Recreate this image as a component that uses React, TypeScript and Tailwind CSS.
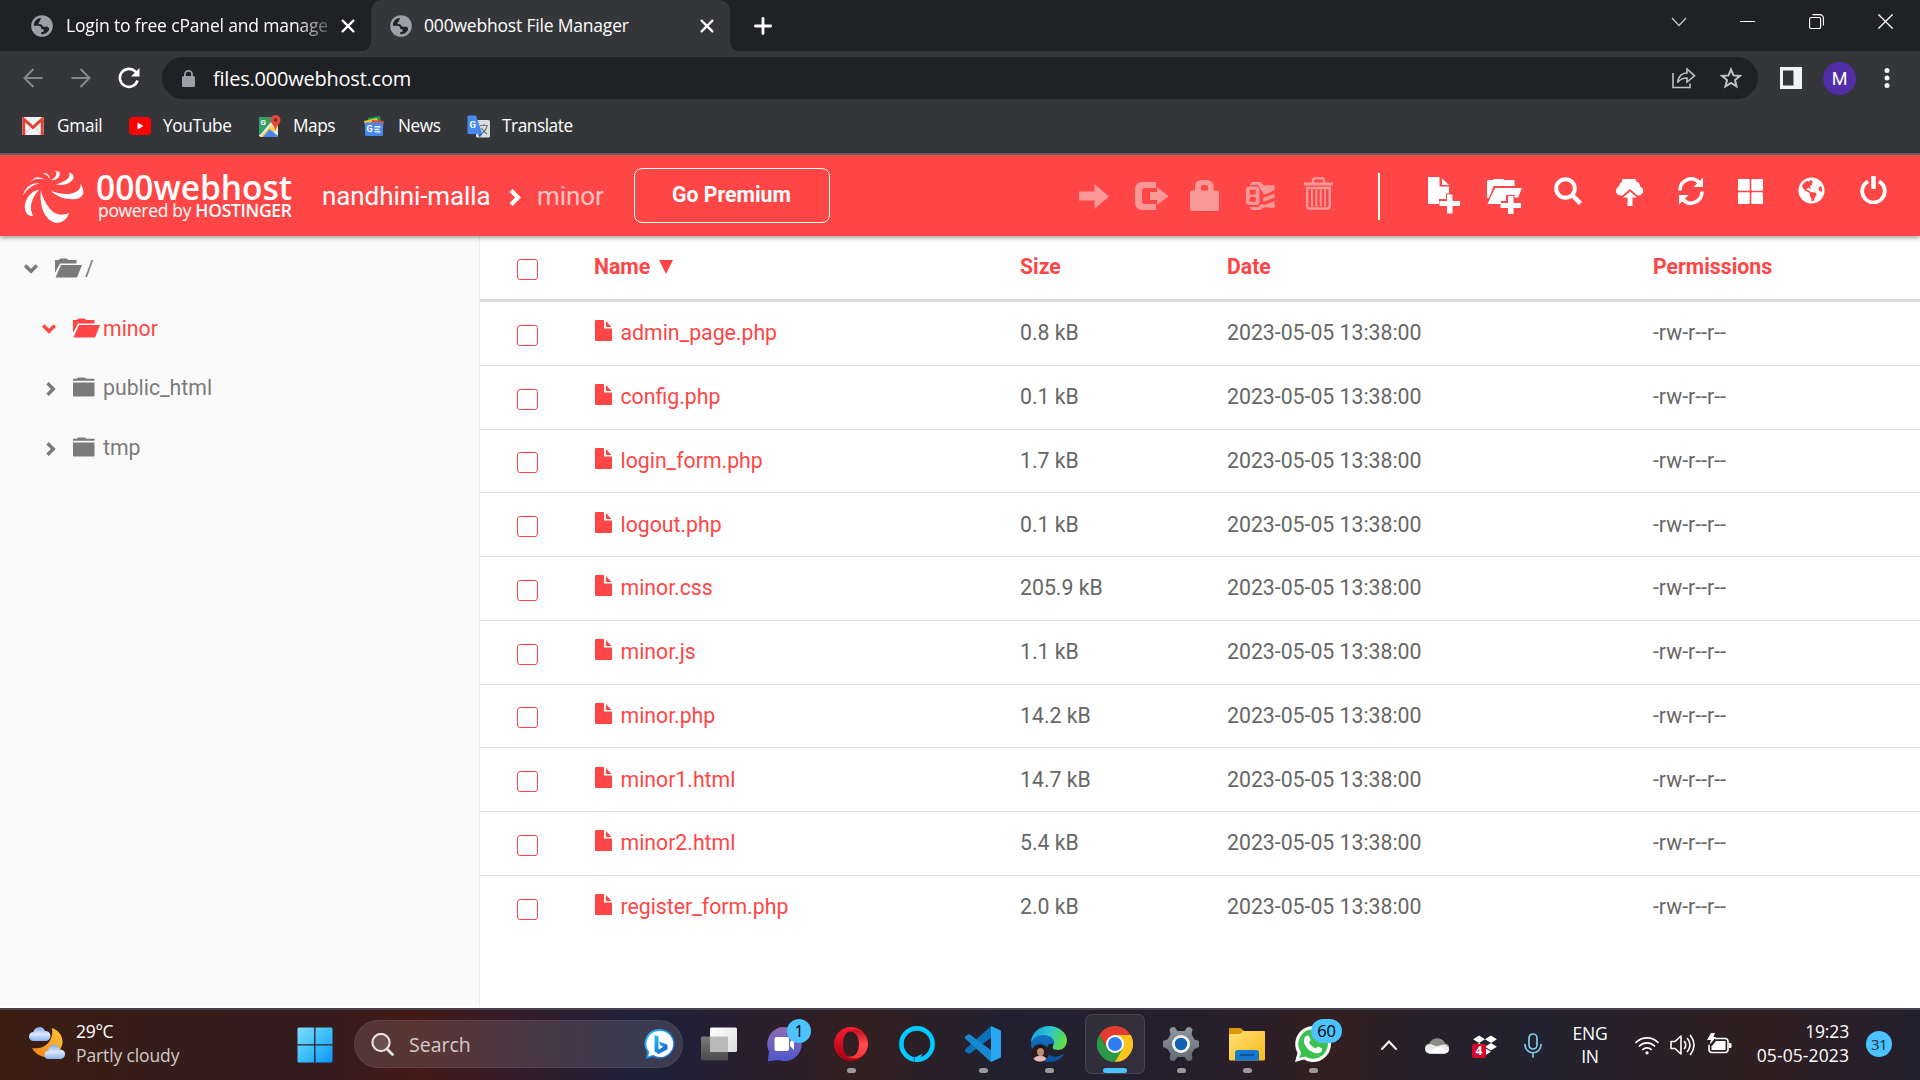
import React from "react";
import { FaDropbox, FaGlobeAmericas } from "react-icons/fa";

const UI = "font-['Open_Sans',sans-serif]";

type IconProps = { className?: string };

const GlobeFavicon = ({ className = "" }: IconProps) => (
  <svg viewBox="0 0 22 22" className={`shrink-0 ${className}`}>
    <circle cx="11" cy="11" r="10.8" fill="#9aa0a6" />
    <path d="M10 3C6 3 2.8 6.5 2.8 10.8l4.7-.1c2 0 2.6 1 2.6 2.3 0 1 1.2 1.3 2.4 1.2l.3 2.3-2.6.7v2c3 .2 6-1.300 7.600-4 .6-1.200.2-2.600-1-3.400l-4-.1c-1.800-.2-1.400-2-3-2.400l-2-.3c-.8-1 .2-2 1.400-2.200z" fill="#202124" />
    <path d="M10.200 3.400l4.200.2c.4 1.400-.4 2.400-1.800 2.600l-1.900.7-1 1.600-2-.5z" fill="#9aa0a6" />
  </svg>
);

const TabClose = ({ className = "" }: IconProps) => (
  <svg viewBox="0 0 14 14" className={`h-[14px] w-[14px] shrink-0 ${className}`} stroke="#fff" strokeWidth="2.200" strokeLinecap="round">
    <path d="M1.600 1.600l10.800 10.800M12.400 1.600L1.600 12.400" />
  </svg>
);

function TabStrip() {
  return (
    <div className="flex h-[51px] items-center bg-[#202124] text-[17.500px] text-white">
      <div className="flex h-full w-[362px] shrink-0 items-center">
        <GlobeFavicon className="ml-[31px] h-[22px] w-[22px]" />
        <div className="ml-[13px] w-[263px] whitespace-nowrap tracking-[-0.160px] [mask-image:linear-gradient(to_right,#000_87%,transparent_104%)]">
          Login to free cPanel and manage
        </div>
        <TabClose className="ml-[12px]" />
      </div>
      <svg viewBox="0 0 10 10" className="-ml-px h-[10px] w-[10px] shrink-0 self-end">
        <path d="M10 0v10H0C6 10 10 6 10 0z" fill="#35363a" />
      </svg>
      <div className="flex h-full w-[359px] shrink-0 items-center rounded-t-[11px] bg-[#35363a]">
        <GlobeFavicon className="ml-[19px] h-[22px] w-[22px]" />
        <div className="ml-[12px] w-[270px] whitespace-nowrap tracking-[-0.190px]">000webhost File Manager</div>
        <TabClose className="ml-[6px]" />
      </div>
      <svg viewBox="0 0 10 10" className="h-[10px] w-[10px] shrink-0 self-end">
        <path d="M0 0v10h10C4 10 0 6 0 0z" fill="#35363a" />
      </svg>
      <svg viewBox="0 0 18 18" className="ml-[14px] h-[18px] w-[18px] shrink-0" stroke="#fff" strokeWidth="2.800" strokeLinecap="round">
        <path d="M9 1.400v15.200M1.400 9h15.200" />
      </svg>
      <div className="ml-auto mr-[27px] flex -translate-y-1 items-center">
        <svg viewBox="0 0 16 10" className="h-[10px] w-[16px]" fill="none" stroke="#c8c8c8" strokeWidth="1.200">
          <path d="M1 1l7 7.500L15 1" />
        </svg>
        <svg viewBox="0 0 15 15" className="ml-[53px] h-[15px] w-[15px]">
          <path d="M0 7h15v1H0z" fill="#fff" />
        </svg>
        <svg viewBox="0 0 15 15" className="ml-[54px] h-[15px] w-[15px]" fill="none" stroke="#fff" strokeWidth="1.100">
          <rect x=".6" y="3.500" width="11" height="11" rx="1.600" />
          <path d="M3.500.6h7.500a3.400 3.400 0 0 1 3.400 3.400v7.500" />
        </svg>
        <svg viewBox="0 0 15 15" className="ml-[54px] h-[15px] w-[15px]" stroke="#fff" strokeWidth="1.300">
          <path d="M.4.4l14.200 14.200M14.600.4L.4 14.600" />
        </svg>
      </div>
    </div>
  );
}

function AddressBar() {
  return (
    <div className="flex h-[54px] items-center bg-[#35363a]">
      <svg viewBox="0 0 20 20" className="ml-[23px] h-[20px] w-[20px] shrink-0" fill="none" stroke="#86888b" strokeWidth="2">
        <path d="M19.500 10H1.500M10.500 1L1.500 10l9 9" />
      </svg>
      <svg viewBox="0 0 20 20" className="ml-[28px] h-[20px] w-[20px] shrink-0" fill="none" stroke="#86888b" strokeWidth="2">
        <path d="M.5 10h18M9.500 1l9 9-9 9" />
      </svg>
      <svg viewBox="0 0 22 22" className="ml-[27px] h-[22px] w-[22px] shrink-0" fill="none" stroke="#fff" strokeWidth="2.600">
        <path d="M19.500 13.500a9 9 0 1 1-2.200-9L19 6" />
        <path d="M21.500 1v8.500H13z" fill="#fff" stroke="none" />
      </svg>
      <div className="ml-[22px] flex h-[42px] w-[1596px] shrink-0 items-center rounded-full bg-[#202124]">
        <svg viewBox="0 0 13 17" className="ml-[20px] h-[17px] w-[13px] shrink-0">
          <rect y="6" width="13" height="11" rx="1.500" fill="#9aa0a6" />
          <path d="M3 7V4.200a3.500 3.300 0 0 1 7 0V7" fill="none" stroke="#9aa0a6" strokeWidth="1.800" />
        </svg>
        <span className="ml-[18px] mt-px w-[1441px] whitespace-nowrap text-[20px] tracking-[-0.220px] text-white">files.000webhost.com</span>
        <svg viewBox="0 0 24 22" className="ml-[18px] h-[22px] w-[24px] shrink-0" fill="none" stroke="#bdc1c6" strokeWidth="1.600">
          <path d="M1 6v14.500h17V16.500" />
          <path d="M5.500 15.500C6.500 9 10 6 15 6V2l7.500 6.800L15 15v-4c-4 0-7 1.200-9.500 4.500z" />
        </svg>
        <svg viewBox="0 0 22 22" className="ml-[24px] h-[22px] w-[22px] shrink-0" fill="none" stroke="#bdc1c6" strokeWidth="2">
          <path d="M11 2.500l2.500 5.900 6.400.5-4.900 4.200 1.500 6.300L11 16l-5.500 3.400L7 13.100 2.100 8.900l6.400-.5z" />
        </svg>
      </div>
      <svg viewBox="0 0 22 22" className="ml-[22px] h-[22px] w-[22px] shrink-0">
        <path d="M0 0h22v22H0z M3 3.500v15h10.500v-15z" fill="#f1f3f4" fillRule="evenodd" />
      </svg>
      <div className="ml-[21px] flex h-[33px] w-[33px] shrink-0 items-center justify-center rounded-full bg-[#512da8] font-[Roboto,sans-serif] text-[18px] text-white">M</div>
      <svg viewBox="0 0 6 22" className="ml-[28px] h-[22px] w-[6px] shrink-0" fill="#f1f3f4">
        <circle cx="3" cy="3.500" r="2.500" />
        <circle cx="3" cy="11" r="2.500" />
        <circle cx="3" cy="18.500" r="2.500" />
      </svg>
    </div>
  );
}

function Bookmarks() {
  return (
    <div className="flex h-[50px] items-center border-b-2 border-[#5f6368] bg-[#35363a] pb-[6px] text-[17.250px] tracking-[-0.450px] text-white">
      <svg viewBox="0 0 22 18" className="ml-[22px] h-[18px] w-[22px] shrink-0">
        <rect width="22" height="18" rx="1.500" fill="#f1f1f1" />
        <path d="M3.500 17L9 10M18.500 17L13 10" stroke="#d3d3d3" />
        <path d="M1.700 18V2L11 10.500 20.300 2v16" fill="none" stroke="#dc4438" strokeWidth="3" />
      </svg>
      <span className="ml-[13px] w-[72px] tracking-[-0.300px]">Gmail</span>
      <svg viewBox="0 0 22 18" className="h-[18px] w-[22px] shrink-0">
        <rect width="22" height="18" rx="4" fill="#f00" />
        <path d="M8.500 5.500v7l6-3.500z" fill="#fff" />
      </svg>
      <span className="ml-[12px] w-[96px] tracking-[-0.350px]">YouTube</span>
      <svg viewBox="0 0 22 22" className="h-[22px] w-[22px] shrink-0">
        <rect y="2" width="19" height="20" rx="2" fill="#e8eaed" />
        <path d="M0 4a2 2 0 0 1 2-2h14L2 19l-2 1z" fill="#34a066" />
        <path d="M1 22L15 7l4 4v2L9.500 22z" fill="#fcd04b" />
        <path d="M4 22l6.500-8L19 21l-1 1z" fill="#4a86ee" />
        <path d="M3 20L15 8l4 4-9 .8z" fill="#f4f4f4" opacity=".5" />
        <text x="1.500" y="10" fontSize="8" fontWeight="700" fill="#fff" fontFamily="Roboto">G</text>
        <path d="M16.500 0a5 5 0 0 1 5 5c0 3.600-4.200 5.400-5 11-.8-5.600-5-7.400-5-11a5 5 0 0 1 5-5z" fill="#e04a3f" />
        <circle cx="16.500" cy="5" r="1.800" fill="#7c2720" />
      </svg>
      <span className="ml-[12px] w-[70px]">Maps</span>
      <svg viewBox="0 0 22 20" className="h-[20px] w-[22px] shrink-0">
        <path d="M5 2l12-2 2 12H5z" fill="#159a55" />
        <path d="M1 5l13-3 3 11H3z" fill="#f7c32e" />
        <path d="M9 4l12 1-1.500 10H8z" fill="#e2483a" />
        <rect x="2" y="6.500" width="18" height="13.500" rx="1.500" fill="#4688f1" />
        <text x="3.500" y="16" fontSize="9" fontWeight="700" fill="#fff" fontFamily="Roboto">G</text>
        <path d="M11.500 10h6v1.500h-6zM11.500 12.700h5v1.500h-5zM11.500 15.300h6v1.300h-6z" fill="#fff" />
      </svg>
      <span className="ml-[13px] w-[69px]">News</span>
      <svg viewBox="0 0 23 23" className="h-[23px] w-[23px] shrink-0">
        <rect x="9" y="5" width="14" height="17.500" rx="1.500" fill="#dcdcdc" />
        <path d="M13 10.500h8M17 9v2M20 11c-1 4-3 6-5.500 7.500M14.500 13c1.500 3 3 4.500 5.500 6" stroke="#6d7680" strokeWidth="1.200" fill="none" />
        <path d="M1.500.5H9L15.500 19H2a1.500 1.500 0 0 1-1.500-1.500v-16z" fill="#4889f0" />
        <path d="M11 19h4.500L12.500 22.500z" fill="#2f5fc8" />
        <text x="2.500" y="12.500" fontSize="9.500" fontWeight="700" fill="#fff" fontFamily="Roboto">G</text>
      </svg>
      <span className="ml-[12px]">Translate</span>
    </div>
  );
}

const HostLogo = () => (
  <svg viewBox="0 0 64 54" className="ml-[22px] mt-[-1px] h-[54px] w-[64px] shrink-0" fill="#fff">
    <path d="M19 20C17 35 22 50 34 53C42 53 46 47 47 43C40 46 33 45 28 39C23 33 20 26 19 20Z" />
    <path d="M28.500 20.500C36 28 46 30 54 29C61 28 64 22 58.500 14C59 20 54 23 47 24C40 24.500 34 23 28.500 20.500Z" />
    <path d="M34 14.500C41 16 49 14 51.500 8C52 5 50 3 47 2.700C49 7 45 11 34 14.500Z" />
    <path d="M29 10C35 11 39 6 37.500 2C36 1 34.500 1 33 1.300C36 3 34 8 29 10Z" />
    <path d="M21 3.500C25 2.500 28 5 27.500 9.500C27 6.500 24.500 4.500 21 3.500Z" />
    <path d="M8.500 12C12 7 17 5.500 22 9.500C17 8 12 9 8.500 12Z" />
    <path d="M1 25.500C3 17 10 12.500 17.500 13.500C10 15 5 19 1 25.500Z" />
    <path d="M17 20C9 20 1.500 31 3 39C4 44 6 46 11 46C6.500 37 10 27 17 20Z" />
  </svg>
);

function AppHeader() {
  return (
    <header className="relative z-10 flex h-[81px] items-start bg-[#ff4646] text-white shadow-[0_2px_4px_rgba(0,0,0,0.35)]">
      <div className="mt-[16px] flex">
        <HostLogo />
        <div className={`ml-[10px] flex w-[198px] flex-col whitespace-nowrap ${UI}`}>
          <span className="mt-[-2px] text-[33.500px] font-semibold leading-[36px] tracking-[-0.020px]">000webhost</span>
          <span className="mt-[-5px] pl-[2px] text-[17.500px] leading-[20px] tracking-[-0.320px]">
            powered by <span className="font-semibold">HOSTINGER</span>
          </span>
        </div>
      </div>
      <div className="ml-[28px] mt-[26px] flex w-[312px] items-start whitespace-nowrap font-[Roboto,sans-serif] text-[26px] leading-[30px] tracking-[-0.090px]">
        <span className="w-[187px]">nandhini-malla</span>
        <svg viewBox="0 0 13 17" className="mt-[8px] h-[17px] w-[13px] shrink-0" fill="none" stroke="#fff" strokeWidth="4.200">
          <path d="M2 1.500l7 7-7 7" />
        </svg>
        <span className="ml-[15px] text-[#ffc4c4]">minor</span>
      </div>
      <div className="mt-[13px] flex h-[55px] w-[196px] shrink-0 items-center justify-center rounded-[8px] border border-white pb-px pr-px font-[Roboto,sans-serif] text-[21.250px] font-bold">
        Go Premium
      </div>
      <div className="ml-[249px] mt-[20px] flex items-start text-[#fa9898]">
        <svg viewBox="0 0 30 25" className="mt-[9px] h-[25px] w-[30px]" fill="currentColor">
          <path d="M0 7.500h15.500V0L30 12.500 15.500 25v-8.500H0z" />
        </svg>
        <svg viewBox="0 0 34 28" className="ml-[26px] mt-[7px] h-[28px] w-[34px]" fill="currentColor">
          <path d="M7 0h14v6H8.500L7 7.500v13L8.500 22H21v6H7a7 7 0 0 1-7-7V7a7 7 0 0 1 7-7z" />
          <path d="M15 10h7V5l11.500 9.200L22 23v-5h-7z" />
        </svg>
        <svg viewBox="0 0 29 31" className="ml-[21px] mt-[5px] h-[31px] w-[29px]" fill="currentColor">
          <path d="M2 10.500h3V6a6 6 0 0 1 6-6h6.500a6 6 0 0 1 6 6v4.500H27a2 2 0 0 1 2 2V29a2 2 0 0 1-2 2H2a2 2 0 0 1-2-2V12.500a2 2 0 0 1 2-2zm9 0h7V7a2 2 0 0 0-2-2h-3a2 2 0 0 0-2 2z" />
        </svg>
        <svg viewBox="0 0 30 28" className="ml-[27px] mt-[7px] h-[28px] w-[30px]" fill="currentColor">
          <path d="M3.500 4.500h6.500a3.500 3.500 0 0 1 3.500 3.500v11.500a3.500 3.500 0 0 1-3.500 3.500H3.500A3.500 3.500 0 0 1 0 19.500V8a3.500 3.500 0 0 1 3.500-3.500zM3.700 7.700v4.800h6.100V7.700zM3.700 15v4.800h6.100V15z" fillRule="evenodd" />
          <path d="M3.500 3L6 0h8.500L18 3.500l10.500-.5v5L18.500 13 15 8l-3-5z" />
          <path d="M28.500 11.500v4L17 20v-4z" />
          <path d="M28.500 19v7L18 25.300 14.500 28H6l-3-3h9l3.500-3 3 1z" />
        </svg>
        <svg viewBox="0 0 29 33" className="ml-[28px] mt-[2px] h-[33px] w-[29px]" fill="none" stroke="currentColor">
          <path d="M0 7h29" strokeWidth="3" />
          <path d="M9 6V3.500Q9 1.300 11.500 1.300h6Q20 1.300 20 3.500V6" strokeWidth="2.400" />
          <path d="M3.200 11h22.600v18q0 2.500-2.500 2.500H5.700q-2.500 0-2.500-2.500z" strokeWidth="2.400" />
          <path d="M8 12.500v17M12.300 12.500v17M16.700 12.500v17M21 12.500v17" strokeWidth="1.900" />
        </svg>
      </div>
      <div className="ml-[45px] mt-[18px] h-[47px] w-[2px] bg-white" />
      <div className="ml-[48px] mt-[20px] flex items-start">
        <svg viewBox="0 0 32 38" className="mt-[2px] h-[38px] w-[32px]" fill="#fff">
          <path d="M0 0h11.500v9.500H21v7h-3v5.500h-7V27H1q-1 0-1-1z" />
          <path d="M14 1.500L21 8h-7z" />
          <path d="M19 17.500h5.500V24H32v5h-7.500v7.500H19V29h-7.500v-5H19z" />
        </svg>
        <svg viewBox="0 0 35 36" className="ml-[27px] mt-[3px] h-[36px] w-[35px]" fill="#fff">
          <path d="M0 3l1-1h5q0-1 1.500-1h8q1.500 0 1.500 1h10.500v6H6.500L2 20H0z" />
          <path d="M8 10h27l-4 9.500h-3.500V17H19v6h-5v3H0.500z" />
          <path d="M21 18h5.500v7H34v5h-7.500v6H21v-6h-7.500v-5H21z" />
        </svg>
        <svg viewBox="0 0 28 28" className="ml-[32px] mt-[2px] h-[28px] w-[28px]" fill="none" stroke="#fff">
          <circle cx="11.500" cy="11.500" r="9.300" strokeWidth="4" />
          <path d="M18.500 18.500l8 8" strokeWidth="4.500" />
        </svg>
        <svg viewBox="0 0 28 27" className="ml-[34px] mt-[4px] h-[27px] w-[28px]" fill="#fff">
          <path d="M6.500 16.500H4A4.500 4.500 0 0 1 .5 10 5 5 0 0 1 3 7 5 5 0 0 1 6 3a7 7 0 0 1 14-.500A5 5 0 0 1 24 7.500a4.800 4.800 0 0 1 .5 8.800l-3 .2-7.500-6.500z" />
          <path d="M14 12.500l7 6h-4.500V27h-5v-8.500H7z" />
        </svg>
        <svg viewBox="0 0 26 28" className="ml-[34px] mt-[2px] h-[28px] w-[26px]" fill="none" stroke="#fff" strokeWidth="3.600">
          <path d="M2 13.500A11 11.300 0 0 1 21 5.500" />
          <path d="M24 14.500A11 11.300 0 0 1 5 22.500" />
          <path d="M25 .5V10h-9.500zM1 27.500V18h9.500z" fill="#fff" stroke="none" />
        </svg>
        <svg viewBox="0 0 25 25" className="ml-[34px] mt-[4px] h-[25px] w-[25px]" fill="#fff">
          <rect width="11.700" height="11.700" rx="1" />
          <rect x="13.300" width="11.700" height="11.700" rx="1" />
          <rect y="13.300" width="11.700" height="11.700" rx="1" />
          <rect x="13.300" y="13.300" width="11.700" height="11.700" rx="1" />
        </svg>
        <FaGlobeAmericas className="ml-[35px] mt-[2px] h-[27px] w-[27px]" color="#fff" />
        <svg viewBox="0 0 27 28" className="ml-[35px] mt-[1px] h-[28px] w-[27px]" fill="none" stroke="#fff">
          <path d="M8 5.300a11.300 11.300 0 1 0 11 0" strokeWidth="3.800" />
          <path d="M13.500 0v13" strokeWidth="4.500" />
        </svg>
      </div>
    </header>
  );
}

const FolderOpen = () => (
  <svg viewBox="0 0 27 20" className="h-[20px] w-[27px] shrink-0" fill="currentColor">
    <path d="M0 2h4Q4 .5 6 .5h5q2 0 2 1.500h8.500v3.500H5L.5 14H0z" />
    <path d="M6 7h21l-5 12.500H0.500z" />
  </svg>
);

const FolderClosed = () => (
  <svg viewBox="0 0 27 20" className="h-[20px] w-[27px] shrink-0" fill="currentColor">
    <path d="M0 1.800h4Q4 .5 6 .5h5q2 0 2 1.300h8.500v2H0z" />
    <path d="M0 5.500h21.500v13q0 1-1 1H1q-1 0-1-1z" />
  </svg>
);

const ChevDown = () => (
  <svg viewBox="0 0 14 10" className="h-[10px] w-[14px] shrink-0" fill="none" stroke="currentColor" strokeWidth="3.400">
    <path d="M1.200 1.500L7 7.300l5.800-5.800" />
  </svg>
);

const ChevRight = () => (
  <svg viewBox="0 0 10 14" className="h-[14px] w-[10px] shrink-0" fill="none" stroke="currentColor" strokeWidth="3.400">
    <path d="M1.500 1.200L7.300 7l-5.800 5.800" />
  </svg>
);

function Sidebar() {
  return (
    <aside className="h-[770px] w-[480px] shrink-0 border-r border-[#ececec] bg-[#fafafa] pt-[2px] font-[Roboto,sans-serif] text-[21.250px] text-[#7a7a7a]">
      <div className="flex h-[60px] items-center pl-[24px]">
        <span className="mt-[2px]"><ChevDown /></span>
        <span className="ml-[17px] mr-[3px]"><FolderOpen /></span>
        <span className="mt-px">/</span>
      </div>
      <div className="flex h-[60px] items-center pl-[42px] text-[#ff4646]">
        <span className="mt-[2px]"><ChevDown /></span>
        <span className="ml-[17px] mr-[3px]"><FolderOpen /></span>
        <span className="mt-px">minor</span>
      </div>
      {["public_html", "tmp"].map((name) => (
        <div key={name} className="flex h-[59.500px] items-center pl-[46px]">
          <span className="mt-[3px]"><ChevRight /></span>
          <span className="ml-[17px] mr-[3px] mt-[-1px]"><FolderClosed /></span>
          <span className="mt-px">{name}</span>
        </div>
      ))}
    </aside>
  );
}

const FILES: [string, string][] = [
  ["admin_page.php", "0.8 kB"],
  ["config.php", "0.1 kB"],
  ["login_form.php", "1.7 kB"],
  ["logout.php", "0.1 kB"],
  ["minor.css", "205.9 kB"],
  ["minor.js", "1.1 kB"],
  ["minor.php", "14.2 kB"],
  ["minor1.html", "14.7 kB"],
  ["minor2.html", "5.4 kB"],
  ["register_form.php", "2.0 kB"],
];

const Checkbox = ({ className = "" }: IconProps) => (
  <span className={`block h-[21px] w-[21px] rounded-[3px] border border-[#ff4646] bg-white ${className}`} />
);

function FileTable() {
  return (
    <main className="h-[772px] flex-1 bg-white font-[Roboto,sans-serif] text-[21.250px] text-[#666]">
      <div className="grid h-[66px] grid-cols-[77px_426px_207px_426px_1fr] items-center border-b-3 border-[#ddd] pl-[37px] text-[21.250px] font-bold text-[#ff4646]">
        <Checkbox className="mt-[3px]" />
        <span className="mt-[-1px] flex items-center">
          Name
          <svg viewBox="0 0 14 14" className="ml-[9px] h-[14px] w-[14px]" fill="currentColor">
            <path d="M0 0h14L7 14z" />
          </svg>
        </span>
        <span className="mt-[-1px]">Size</span>
        <span className="mt-[-1px]">Date</span>
        <span className="mt-[-1px]">Permissions</span>
      </div>
      {FILES.map(([name, size]) => (
        <div key={name} className="grid h-[63.750px] grid-cols-[77px_426px_207px_426px_1fr] items-center border-b border-[#ddd] pl-[37px] last:border-transparent">
          <Checkbox className="mt-[4px]" />
          <span className="flex items-center text-[#ff4646]">
            <svg viewBox="0 0 17 21" className="ml-[1px] mr-[8.500px] mt-[-5px] h-[21px] w-[17px]" fill="currentColor">
              <path d="M1 0h8v8.500h8V20q0 1-1 1H1q-1 0-1-1V1q0-1 1-1z" />
              <path d="M11 1l5.500 6H11z" />
            </svg>
            {name}
          </span>
          <span>{size}</span>
          <span>2023-05-05 13:38:00</span>
          <span>-rw-r--r--</span>
        </div>
      ))}
    </main>
  );
}

const AppCell = ({ children, running, active }: { children: React.ReactNode; running?: boolean; active?: boolean }) => (
  <div className="flex h-full w-[66px] shrink-0 justify-center pt-[4px]">
    <div className={active ? "flex h-[60px] w-[60px] flex-col items-center rounded-[7px] border border-white/10 bg-white/[0.07] pt-[11px]" : "flex h-[60px] w-[60px] flex-col items-center pt-[12px]"}>
      <div className="relative h-[36px] w-[36px] shrink-0">{children}</div>
      {active && <div className="mt-[6px] h-[5px] w-[24px] shrink-0 rounded-full bg-[#4cc2ff]" />}
      {running && <div className="mt-[6px] h-[5px] w-[9px] shrink-0 rounded-full bg-[#9b989c]" />}
    </div>
  </div>
);

function Taskbar() {
  return (
    <footer className="flex h-[72px] items-start border-t-2 border-[#48404a] bg-[linear-gradient(90deg,#3b1e13_0px,#341c1c_240px,#341c1f_310px,#431a16_420px,#3a1b24_480px,#20203a_630px,#221f35_690px,#331f20_860px,#222030_1000px,#241f2d_1200px,#331f20_1330px,#262029_1420px,#232230_1540px,#2c1f23_1700px,#301e22_1770px,#22202e_1920px)] bg-origin-border text-white">
      <svg viewBox="0 0 38 36" className="ml-[28px] mt-[14px] h-[36px] w-[38px] shrink-0">
        <defs>
          <linearGradient id="moon" x1="0" y1="1" x2="1" y2="0"><stop offset="0" stopColor="#f08418" /><stop offset="1" stopColor="#fbc43a" /></linearGradient>
          <linearGradient id="cloud" x1="0" y1="0" x2="0" y2="1"><stop offset="0" stopColor="#7fa9ec" /><stop offset=".5" stopColor="#dbe8fc" /><stop offset="1" stopColor="#8ab0ec" /></linearGradient>
        </defs>
        <path d="M24 4c9 3 13 12 9 20-5 11-22 13-29 0 12 2 22-6 20-20z" fill="url(#moon)" />
        <path d="M5.500 17a4.500 4.500 0 0 1 0-9 6 6 0 0 1 11.500-1 5 5 0 0 1 1 10z" fill="url(#cloud)" />
        <path d="M20.500 35a4 4 0 0 1 0-8 5.500 5.500 0 0 1 11-1.500 4.800 4.800 0 0 1 1.500 9.500z" fill="url(#cloud)" />
      </svg>
      <div className="ml-[10px] mt-[9px] flex w-[221px] flex-col whitespace-nowrap text-[17.500px] leading-[24px] tracking-[-0.120px]">
        <span className="tracking-[-0.300px]">29°C</span>
        <span className="text-[#cfc9c7]">Partly cloudy</span>
      </div>
      <svg viewBox="0 0 36 36" className="mt-[17px] h-[36px] w-[36px] shrink-0">
        <defs><linearGradient id="win" x1="0" y1="0" x2="1" y2="1"><stop offset="0" stopColor="#7fdcff" /><stop offset=".5" stopColor="#3cc0fb" /><stop offset="1" stopColor="#0a94fa" /></linearGradient></defs>
        <path d="M1.500.5h15.700v16.700H.5V1.500zM18.500.5h16l1 1v15.700h-17zM.5 18.500h16.700v17H1.500l-1-1zM18.500 18.500h17v16l-1 1h-16z" fill="url(#win)" />
      </svg>
      <div className="ml-[21px] mt-[10px] flex h-[48px] w-[329px] shrink-0 items-center rounded-full border border-white/5 bg-white/[0.12]">
        <svg viewBox="0 0 23 23" className="ml-[16px] h-[23px] w-[23px] shrink-0" fill="none" stroke="#e4e0e0">
          <circle cx="10" cy="9.500" r="8.600" strokeWidth="2.200" fill="#ffffff22" />
          <path d="M16 16l5.500 5.500" strokeWidth="2.800" strokeLinecap="round" />
        </svg>
        <span className="ml-[15px] mt-px w-[235px] text-[19.500px] text-[#d3cccd]">Search</span>
        <svg viewBox="0 0 32 32" className="h-[32px] w-[32px]">
          <defs><linearGradient id="bing" x1="0" y1="0" x2="1" y2="1"><stop offset="0" stopColor="#22c3f3" /><stop offset="1" stopColor="#1756c9" /></linearGradient></defs>
          <path d="M16 1a14.800 14.800 0 1 1-7 27.900L1.500 31 3 24A14.800 14.800 0 0 1 16 1z" fill="url(#bing)" />
          <path d="M16 3a13 13 0 1 1-6.700 24L4 28.500 5.200 24A13 13 0 0 1 16 3z" fill="#fff" />
          <path d="M10.500 7l4 1.500v13l5-2.700-3-1.300-1.500-4 8.500 3.200v4.600L14.500 26l-4-2.500z" fill="url(#bing)" />
        </svg>
      </div>
      <div className="ml-[3px] flex h-[70px]">
        <AppCell>
          <svg viewBox="0 0 36 36" className="h-full w-full">
            <defs>
              <linearGradient id="tv1" x1="0" y1="0" x2="1" y2="1"><stop offset="0" stopColor="#fff" /><stop offset="1" stopColor="#dcdcdc" /></linearGradient>
              <linearGradient id="tv2" x1="0" y1="0" x2="0" y2="1"><stop offset="0" stopColor="#7a7a7a" /><stop offset="1" stopColor="#4a4a4a" /></linearGradient>
            </defs>
            <rect x="0" y="10.500" width="27" height="24" rx="1.500" fill="url(#tv2)" />
            <rect x="9" y="1.500" width="27" height="24.500" rx="1.500" fill="url(#tv1)" />
            <path d="M9 10.500h18V26H10.500L9 24.500z" fill="#b9b9b9" />
          </svg>
        </AppCell>
        <AppCell>
          <svg viewBox="0 0 36 36" className="h-full w-full">
            <defs><linearGradient id="chat" x1="0" y1="0" x2="0" y2="1"><stop offset="0" stopColor="#8c6bb0" /><stop offset="1" stopColor="#4f57d0" /></linearGradient></defs>
            <path d="M18 1a17 17 0 1 1-6 33L.8 35.200 2 25.500A17 17 0 0 1 18 1z" fill="url(#chat)" />
            <rect x="7.500" y="11" width="14.500" height="14" rx="2" fill="#fff" />
            <path d="M23 16l4-4v12l-4-4z" fill="#fff" />
          </svg>
          <div className="absolute left-[20px] top-[-7px] flex h-[24px] w-[24px] items-center justify-center rounded-full bg-[#4cc2ff] text-[16px] text-black">1</div>
        </AppCell>
        <AppCell running>
          <svg viewBox="0 0 36 36" className="h-full w-full">
            <defs>
              <linearGradient id="op" x1="0" y1="0" x2="0" y2="1"><stop offset="0" stopColor="#ff1b2d" /><stop offset="1" stopColor="#a70014" /></linearGradient>
              <linearGradient id="op2" x1="0" y1="0" x2="0" y2="1"><stop offset="0" stopColor="#c3101f" /><stop offset=".5" stopColor="#ff4b4b" /><stop offset="1" stopColor="#ee3a3a" /></linearGradient>
            </defs>
            <path d="M18 1a17 17 0 1 1 0 34 17 17 0 0 1 0-34zm0 4c-5 0-8 6-8 13s3 13 8 13 8-6 8-13-3-13-8-13z" fill="url(#op)" fillRule="evenodd" />
            <path d="M13 7C25-1 35 8 35 18S25 37 13 30c9 3 13-4 13-12S22 3 13 7z" fill="url(#op2)" />
          </svg>
        </AppCell>
        <AppCell>
          <svg viewBox="0 0 36 36" className="h-full w-full">
            <circle cx="18" cy="18" r="15.600" fill="none" stroke="#00caff" strokeWidth="4.600" />
            <path d="M15.300 30v6" stroke="#222030" strokeWidth=".7" />
            <path d="M15.800 35.800v-4.800c3-.8 5.500-1.800 8-3.800l-5 8.600z" fill="#00caff" />
          </svg>
        </AppCell>
        <AppCell running>
          <svg viewBox="0 0 36 36" className="h-full w-full">
            <path d="M26 0L0 23.500v2l3 2h2L27 11z" fill="#0a6fb4" />
            <path d="M26 36L0 12.500v-2l3-2h2L27 25z" fill="#1588cf" />
            <path d="M26 0l9 4q1 .5 1 2v24q0 1.500-1 2l-9 4z" fill="#2aa6f2" />
          </svg>
        </AppCell>
        <AppCell running>
          <svg viewBox="0 0 36 36" className="h-full w-full">
            <defs>
              <linearGradient id="ed1" x1="0" y1="0" x2="1" y2=".4"><stop offset="0" stopColor="#1b93d8" /><stop offset=".5" stopColor="#2cc3d6" /><stop offset="1" stopColor="#5fdc4c" /></linearGradient>
              <linearGradient id="ed2" x1="0" y1="0" x2="0" y2="1"><stop offset="0" stopColor="#1274c8" /><stop offset="1" stopColor="#0c4f9c" /></linearGradient>
            </defs>
            <path d="M0 16A18 17 0 0 1 18 0c10 0 18 7 18 14 0 7-5 10-9 10-5 0-6-2-5-4 2-4-2-8-7-8-7 0-12 3-15 4z" fill="url(#ed1)" />
            <path d="M0 18C1 12 7 8.500 13 9c8 .500 11 5 10 9-5-2-9 3-6 9 3 5 10 5 17 0-4 6-9 9-16 9C8 36 0 28 0 18z" fill="url(#ed2)" />
            <circle cx="9" cy="27" r="9" fill="#2a1c1e" />
            <path d="M2.500 33c1-2.500 4-3 6.500-3s5.500.5 6.500 3a9 9 0 0 1-13 0z" fill="#e3b9bd" />
            <ellipse cx="9.500" cy="25.500" rx="3.500" ry="5" fill="#bf8a76" />
            <path d="M5.500 25c0-7 8-7 8 0-1-2-2-3-4-3s-3 1-4 3z" fill="#1d1315" />
          </svg>
        </AppCell>
        <AppCell active>
          <svg viewBox="0 0 36 36" className="h-full w-full">
            <path d="M18 18L2.400 9A18 18 0 0 1 33.600 9z" fill="#e33b2e" />
            <path d="M18 18L33.600 9A18 18 0 0 1 18 36z" fill="#fcc31e" />
            <path d="M18 9h15.600A18 18 0 0 1 36 18H18z" fill="#fcc31e" />
            <path d="M2.400 9l7.800 13.500L18 18V9z" fill="#e33b2e" />
            <path d="M2.400 9l7.800 13.500L18 27l7.800-4.500L18 36A18 18 0 0 1 2.400 9z" fill="#2a9a48" />
            <circle cx="18" cy="18" r="9" fill="#fff" />
            <circle cx="18" cy="18" r="7" fill="#2f7df0" />
          </svg>
        </AppCell>
        <AppCell running>
          <svg viewBox="0 0 36 36" className="h-full w-full">
            <defs><linearGradient id="gear" x1="0" y1="0" x2="0" y2="1"><stop offset="0" stopColor="#8e979e" /><stop offset="1" stopColor="#636c74" /></linearGradient></defs>
            <path d="M8 1.500l3.500-.5 3 4h7l3-4 3.500.5 1.500 2-1 5 3 5 4.500 1.500v6L31.500 23l-3 4.500 1 5-1.500 2-3.500.500-3-4h-7l-3 4-3.500-.500-1.500-2 1-5-3-4.500L0 21v-6l4.500-1.500 3-5-1-5z" fill="url(#gear)" />
            <circle cx="18" cy="18" r="9" fill="#f2f2f2" />
            <circle cx="18" cy="18" r="6.200" fill="#0f62b4" />
          </svg>
        </AppCell>
        <AppCell running>
          <svg viewBox="0 0 36 36" className="h-full w-full">
            <defs><linearGradient id="fold" x1="0" y1="0" x2="1" y2="1"><stop offset="0" stopColor="#ffe07a" /><stop offset="1" stopColor="#fbb917" /></linearGradient></defs>
            <path d="M0 3q0-1 1-1h10q1.500 0 2.500 1.500L15 5v6H0z" fill="#dc9a08" />
            <path d="M0 8h10q2 0 4-3h21q1 0 1 1v27q0 1.500-1.500 1.500h-33Q0 34.500 0 33z" fill="url(#fold)" />
            <path d="M6 34.500V27q0-3 3-3h18q3 0 3 3v7.500z" fill="#1479cc" />
            <rect x="11" y="28" width="14" height="1.800" fill="#0a4f94" />
          </svg>
        </AppCell>
        <AppCell running>
          <svg viewBox="0 0 36 36" className="h-full w-full">
            <path d="M18 0a18 18 0 1 1-9 33.600L0 36l2.500-9.300A18 18 0 0 1 18 0z" fill="#fff" />
            <path d="M18 3.200a14.800 14.800 0 1 1-7.800 27.300l-5.700 1.500 1.500-5.600A14.800 14.800 0 0 1 18 3.200z" fill="#3cc251" />
            <path d="M12.500 9.500c.8 0 1.300 0 1.700 1l1.400 3.300c.2.600-.8 1.700-1.600 2.700 1.700 3 3.600 4.600 6.800 6 .8-1 1.600-2.200 2.300-2l3.500 1.700c.8.400.5 2.300-.2 3.300-1 1.400-3.600 2.200-5.400 1.700-6-1.500-10.300-5-12-10.700-.5-2.700.8-6.800 3.500-7z" fill="#fff" />
          </svg>
          <div className="absolute left-[16px] top-[-7px] flex h-[24px] w-[31px] items-center justify-center rounded-full bg-[#4cc2ff] text-[16.500px] tracking-[-0.300px] text-black">60</div>
        </AppCell>
      </div>
      <div className="ml-auto flex h-[70px] w-[539px] shrink-0 items-center">
        <svg viewBox="0 0 16 10" className="h-[10px] w-[16px] shrink-0" fill="none" stroke="#fff" strokeWidth="1.900" strokeLinecap="round">
          <path d="M1 9l7-7.500L15 9" />
        </svg>
        <svg viewBox="0 0 24 17" className="ml-[28px] h-[17px] w-[24px] shrink-0">
          <path d="M5 16.500a5 5 0 0 1-.5-10A8.500 8.500 0 0 1 20 6.500a5 5 0 0 1-1 10z" fill="#a2a2a2" />
          <path d="M4.500 6.500A8.500 8.500 0 0 1 20 6.500l-6 4z" fill="#8a8a8a" />
          <path d="M4.500 16.500a4.600 4.600 0 0 1 .5-9.200c4 0 5 3 9 1.500 4-2 9-1 10 3a4.500 4.500 0 0 1-4.500 4.700z" fill="#e9e9e9" />
          <path d="M1 14.500L15 9.500l8.500 5-3.500 2H4.500z" fill="#fff" />
        </svg>
        <div className="relative ml-[24px] h-[23px] w-[24px] shrink-0">
          <FaDropbox className="h-[23px] w-[24px]" color="#fff" />
          <div className="absolute left-[-1px] top-[10px] flex h-[14px] w-[14px] items-center justify-center rounded-[2px] bg-[#d5082c] text-[12px] font-bold">4</div>
        </div>
        <svg viewBox="0 0 18 25" className="ml-[27px] h-[25px] w-[18px] shrink-0" fill="none" stroke="#7ccbe6" strokeWidth="1.700" strokeLinecap="round">
          <rect x="5" y="1" width="8" height="15" rx="4" />
          <path d="M1 11.500c0 11 16 11 16 0M9 20v4" />
        </svg>
        <div className="ml-[30px] mt-[-1px] flex w-[36px] flex-col items-center text-[17.500px] leading-[22.500px] tracking-[-0.200px]">
          <span>ENG</span>
          <span>IN</span>
        </div>
        <svg viewBox="0 0 24 19" className="ml-[27px] h-[19px] w-[24px] shrink-0" fill="none" stroke="#fff" strokeWidth="1.700" strokeLinecap="round">
          <path d="M1 6.500a15.500 15.500 0 0 1 22 0M4.500 10a10.500 10.500 0 0 1 15 0M7.800 13.500a6 6 0 0 1 8.400 0" />
          <circle cx="12" cy="16.800" r="1.600" fill="#fff" stroke="none" />
        </svg>
        <svg viewBox="0 0 25 22" className="ml-[11px] h-[22px] w-[25px] shrink-0" fill="none" stroke="#fff" strokeWidth="1.600" strokeLinecap="round" strokeLinejoin="round">
          <path d="M1 7.500h4L11 2v18l-6-5.500H1zM14.500 7.500q2.500 3.500 0 7M17.500 4.500q5 6.500 0 13M20.500 1.500q7 9.500 0 19" />
        </svg>
        <svg viewBox="0 0 25 21" className="ml-[12px] mt-[-4px] h-[21px] w-[25px] shrink-0">
          <path d="M8 5.500h10q3 0 3 3v8q0 3-3 3H5q-3 0-3-3V12" fill="none" stroke="#fff" strokeWidth="1.600" />
          <path d="M9 8h9.500v9H4.500v-3.500z" fill="#fff" />
          <path d="M22 10h1.500q1 0 1 1v3q0 1-1 1H22zM4 0h4L6.500 4H9L2.500 12 4 7H0z" fill="#fff" />
        </svg>
        <div className="ml-[13px] mt-[-4px] flex w-[104px] flex-col items-end whitespace-nowrap text-[17.500px] leading-[24px] tracking-[0.100px]">
          <span className="tracking-[-0.150px]">19:23</span>
          <span>05-05-2023</span>
        </div>
        <div className="ml-[17px] mt-[-2px] flex h-[26px] w-[26px] items-center justify-center rounded-full bg-[#4cc2ff] text-[15px] tracking-[-0.600px] text-[#12303f]">31</div>
      </div>
    </footer>
  );
}

export default function App() {
  return (
    <div className={`flex h-[1080px] w-[1920px] flex-col overflow-hidden bg-white ${UI}`}>
      <TabStrip />
      <AddressBar />
      <Bookmarks />
      <AppHeader />
      <div className="flex h-[772px]">
        <Sidebar />
        <FileTable />
      </div>
      <Taskbar />
    </div>
  );
}
